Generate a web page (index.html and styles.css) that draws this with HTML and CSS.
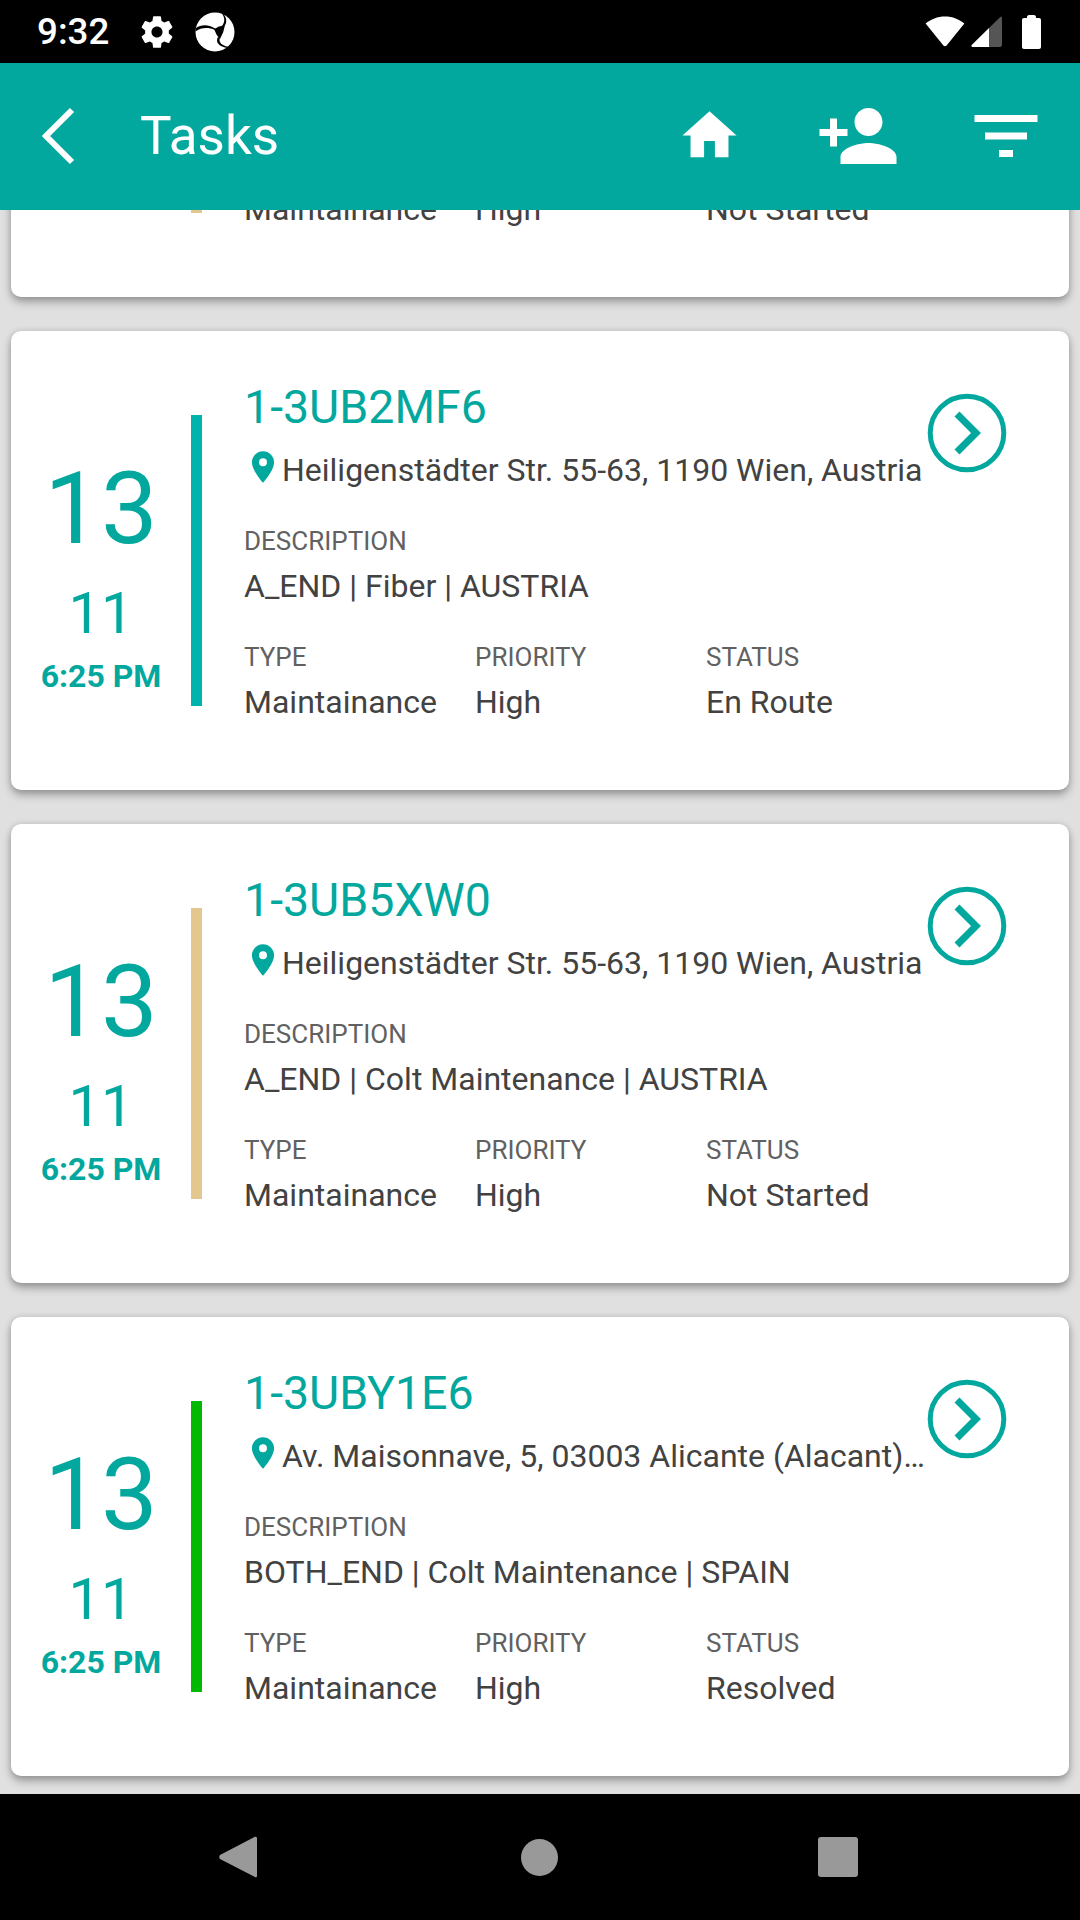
FILE: index.html
```html
<!DOCTYPE html>
<html>
    <head>
        <meta charset="utf-8" />
        <title>Tasks</title>
        <link rel="stylesheet" href="styles.css">
    </head>

    <body>
        <div class="phone">
            <div class="status-bar">
                <span class="clock">9:32</span>
                <svg class="gear" viewBox="0 0 24 24"><path fill="#fff" d="M19.43 12.98c.04-.32.07-.64.07-.98s-.03-.66-.07-.98l2.11-1.65c.19-.15.24-.42.12-.64l-2-3.46c-.12-.22-.39-.3-.61-.22l-2.49 1c-.52-.4-1.08-.73-1.69-.98l-.38-2.65C14.46 2.18 14.25 2 14 2h-4c-.25 0-.46.18-.49.42l-.38 2.65c-.61.25-1.17.59-1.69.98l-2.49-1c-.23-.09-.49 0-.61.22l-2 3.46c-.13.22-.07.49.12.64l2.11 1.65c-.04.32-.07.65-.07.98s.03.66.07.98l-2.11 1.65c-.19.15-.24.42-.12.64l2 3.46c.12.22.39.3.61.22l2.49-1c.52.4 1.08.73 1.69.98l.38 2.65c.03.24.24.42.49.42h4c.25 0 .46-.18.49-.42l.38-2.65c.61-.25 1.17-.59 1.69-.98l2.49 1c.23.09.49 0 .61-.22l2-3.46c.12-.22.07-.49-.12-.64l-2.11-1.65zM12 15.5c-1.93 0-3.5-1.57-3.5-3.5s1.57-3.5 3.5-3.5 3.5 1.57 3.5 3.5-1.57 3.5-3.5 3.5z"/></svg>
                <svg class="app-logo" viewBox="0 0 40 40">
                    <circle cx="20" cy="20" r="19.5" fill="#fff"/>
                    <path fill="#000" d="M19 17 Q24 14 30 13 Q29 20 25 27 Q21 23 19 17z"/>
                    <path fill="#000" d="M27 14 C30 10 30 6 27 1.500 L28.500 2 C32 6 32 11 29.500 14z"/>
                    <path fill="#000" d="M20 16.500 C13 12 6 12.500 1 16 L0.500 19.500 C6 15.500 13 15 20 18z"/>
                    <path fill="#000" d="M23 25 C20 30 24 35 33 36 L34.500 35 C27 34 23 30 25 26z"/>
                </svg>
                <svg class="wifi" viewBox="0 0 40 31"><path fill="#fff" d="M20 0.5C12.5 0.5 5.8 3.2 0.6 7.6L18.4 29.6c.8 1 2.4 1 3.2 0L39.4 7.6C34.2 3.2 27.5 0.5 20 0.5z"/></svg>
                <svg class="signal" viewBox="0 0 31 31">
                    <path fill="#555" d="M18 12 L29 1.2c.8-.8 2-.3 2 .8V29c0 1-.8 2-2 2H18z"/>
                    <path fill="#fff" d="M18 12 V31 H1.5c-1 0-1.5-1.2-.8-2z"/>
                </svg>
                <svg class="battery" viewBox="0 0 19 34"><path fill="#fff" d="M5 2c0-1 .7-2 2-2h5c1.300 0 2 1 2 2v1h3c1.200 0 2 .8 2 2v27c0 1.200-.8 2-2 2H2c-1.200 0-2-.8-2-2V5c0-1.200.8-2 2-2h3z"/></svg>
            </div>

            <div class="app-bar">
                <svg class="icon-back" viewBox="0 0 36 58"><path fill="none" stroke="#fff" stroke-width="6" d="M32 3 L6 29 L32 55"/></svg>
                <h1 class="app-title">Tasks</h1>
                <svg class="icon-home" viewBox="0 0 24 24"><path fill="#fff" d="M10 20v-6h4v6h5v-8h3L12 3 2 12h3v8z"/></svg>
                <svg class="icon-add" viewBox="0 0 24 24"><path fill="#fff" d="M15 12c2.210 0 4-1.790 4-4s-1.790-4-4-4-4 1.790-4 4 1.790 4 4 4zm-9-2V7H4v3H1v2h3v3h2v-3h3v-2H6zm9 4c-2.670 0-8 1.340-8 4v2h16v-2c0-2.660-5.330-4-8-4z"/></svg>
                <svg class="icon-filter" viewBox="0 0 24 24"><path fill="#fff" d="M10 18h4v-2h-4v2zM3 6v2h18V6H3zm3 7h12v-2H6v2z"/></svg>
            </div>

            <div class="task-list">
                <div class="card">
                    <div class="date"></div>
                    <div class="bar bar-pending"></div>
                    <div class="info info-scrolled">
                        <div class="fields">
                            <div class="value">Maintainance</div>
                            <div class="value">High</div>
                            <div class="value">Not Started</div>
                        </div>
                    </div>
                </div>

                <div class="card">
                    <div class="date">
                        <span class="day">13</span>
                        <span class="month">11</span>
                        <span class="time">6:25 PM</span>
                    </div>
                    <div class="bar bar-route"></div>
                    <div class="info">
                        <div class="task-id">1-3UB2MF6</div>
                        <div class="address">
                            <svg class="pin" viewBox="0 0 24 24"><path d="M12 2C8.130 2 5 5.130 5 9c0 5.250 7 13 7 13s7-7.750 7-13c0-3.870-3.130-7-7-7zm0 9.500a2.500 2.500 0 0 1 0-5 2.500 2.500 0 0 1 0 5z"/></svg>
                            <span class="address-text">Heiligenstädter Str. 55-63, 1190 Wien, Austria</span>
                        </div>
                        <div class="label label-desc">DESCRIPTION</div>
                        <div class="value">A_END | Fiber | AUSTRIA</div>
                        <div class="fields">
                            <div><div class="label">TYPE</div><div class="value">Maintainance</div></div>
                            <div><div class="label">PRIORITY</div><div class="value">High</div></div>
                            <div><div class="label">STATUS</div><div class="value">En Route</div></div>
                        </div>
                    </div>
                    <svg class="open" viewBox="0 0 80 80"><circle cx="40" cy="40" r="36.8" fill="none" stroke="#02a89e" stroke-width="5"/><path fill="none" stroke="#02a89e" stroke-width="7" d="M30 21 L49 40 L30 59"/></svg>
                </div>

                <div class="card">
                    <div class="date">
                        <span class="day">13</span>
                        <span class="month">11</span>
                        <span class="time">6:25 PM</span>
                    </div>
                    <div class="bar bar-pending"></div>
                    <div class="info">
                        <div class="task-id">1-3UB5XW0</div>
                        <div class="address">
                            <svg class="pin" viewBox="0 0 24 24"><path d="M12 2C8.130 2 5 5.130 5 9c0 5.250 7 13 7 13s7-7.750 7-13c0-3.870-3.130-7-7-7zm0 9.500a2.500 2.500 0 0 1 0-5 2.500 2.500 0 0 1 0 5z"/></svg>
                            <span class="address-text">Heiligenstädter Str. 55-63, 1190 Wien, Austria</span>
                        </div>
                        <div class="label label-desc">DESCRIPTION</div>
                        <div class="value">A_END | Colt Maintenance | AUSTRIA</div>
                        <div class="fields">
                            <div><div class="label">TYPE</div><div class="value">Maintainance</div></div>
                            <div><div class="label">PRIORITY</div><div class="value">High</div></div>
                            <div><div class="label">STATUS</div><div class="value">Not Started</div></div>
                        </div>
                    </div>
                    <svg class="open" viewBox="0 0 80 80"><circle cx="40" cy="40" r="36.8" fill="none" stroke="#02a89e" stroke-width="5"/><path fill="none" stroke="#02a89e" stroke-width="7" d="M30 21 L49 40 L30 59"/></svg>
                </div>

                <div class="card">
                    <div class="date">
                        <span class="day">13</span>
                        <span class="month">11</span>
                        <span class="time">6:25 PM</span>
                    </div>
                    <div class="bar bar-resolved"></div>
                    <div class="info">
                        <div class="task-id">1-3UBY1E6</div>
                        <div class="address">
                            <svg class="pin" viewBox="0 0 24 24"><path d="M12 2C8.130 2 5 5.130 5 9c0 5.250 7 13 7 13s7-7.750 7-13c0-3.870-3.130-7-7-7zm0 9.500a2.500 2.500 0 0 1 0-5 2.500 2.500 0 0 1 0 5z"/></svg>
                            <span class="address-text">Av. Maisonnave, 5, 03003 Alicante (Alacant), Spain</span>
                        </div>
                        <div class="label label-desc">DESCRIPTION</div>
                        <div class="value">BOTH_END | Colt Maintenance | SPAIN</div>
                        <div class="fields">
                            <div><div class="label">TYPE</div><div class="value">Maintainance</div></div>
                            <div><div class="label">PRIORITY</div><div class="value">High</div></div>
                            <div><div class="label">STATUS</div><div class="value">Resolved</div></div>
                        </div>
                    </div>
                    <svg class="open" viewBox="0 0 80 80"><circle cx="40" cy="40" r="36.8" fill="none" stroke="#02a89e" stroke-width="5"/><path fill="none" stroke="#02a89e" stroke-width="7" d="M30 21 L49 40 L30 59"/></svg>
                </div>
            </div>

            <div class="nav-bar">
                <svg class="nav-back" viewBox="0 0 38 42"><path fill="#999" d="M37 1c.6 0 1 .5 1 1v38c0 1.300-1.300 1.800-2 1L1 23c-1-1.200-1-2.800 0-4L35 1.200c.5-.3 1.300-.6 2-.2z"/></svg>
                <div class="nav-home"></div>
                <div class="nav-recent"></div>
            </div>
        </div>
    </body>
</html>
```

FILE: styles.css
```css
html,
body {
    margin: 0;
    padding: 0;
    font-family: 'Roboto', sans-serif;
    --teal: #02a89e;
    --dark-text: #424242;
    --label-text: #616161;
}

.phone {
    width: 1080px;
    height: 1920px;
    display: flex;
    flex-direction: column;
    overflow: hidden;
    background: #e0e0e0;
}

/* status bar */
.status-bar {
    height: 63px;
    flex: none;
    display: flex;
    align-items: center;
    background: #000;
    color: #fff;
    padding-left: 37px;
    padding-right: 39px;
    box-sizing: border-box;
}

.clock {
    font-size: 36.75px;
    font-weight: 500;
    line-height: 63px;
    width: 101px;
}

.gear {
    width: 38px;
    height: 38px;
}

.app-logo {
    width: 40px;
    height: 40px;
    margin-left: 19px;
}

.wifi {
    width: 40px;
    height: 31px;
    margin-left: auto;
}

.signal {
    width: 31px;
    height: 31px;
    margin-left: 6px;
}

.battery {
    width: 19px;
    height: 34px;
    margin-left: 20px;
}

/* app bar */
.app-bar {
    height: 147px;
    flex: none;
    display: flex;
    align-items: center;
    background: var(--teal);
    color: #fff;
    padding: 0 32px 2px 40px;
    box-sizing: border-box;
    position: relative;
    z-index: 1;
}

.icon-back {
    width: 36px;
    height: 58px;
}

.app-title {
    margin: 0 0 0 64px;
    font-size: 53px;
    font-weight: 400;
    line-height: 60px;
}

.icon-home {
    width: 65px;
    height: 65px;
    margin-left: auto;
}

.icon-add {
    width: 84px;
    height: 84px;
    margin-left: 74px;
}

.icon-filter {
    width: 84px;
    height: 84px;
    margin-left: 64px;
}

/* task list, scrolled so the first card is cut by the app bar */
.task-list {
    flex: 1;
    min-height: 0;
    overflow: hidden;
    display: flex;
    flex-direction: column;
    justify-content: flex-end;
    gap: 34px;
    padding: 0 11px 18px;
}

.card {
    flex: none;
    height: 459px;
    display: flex;
    background: #fff;
    border-radius: 10px;
    box-shadow: 0 5px 9px rgba(0, 0, 0, 0.3), 0 0 6px rgba(0, 0, 0, 0.12);
}

.date {
    width: 180px;
    flex: none;
    padding-top: 118px;
    box-sizing: border-box;
    display: flex;
    flex-direction: column;
    align-items: center;
    color: var(--teal);
}

.day {
    font-size: 101px;
    line-height: 120px;
}

.month {
    font-size: 57.75px;
    line-height: 68px;
    margin-top: 10px;
}

.time {
    font-size: 32px;
    font-weight: 700;
    line-height: 37px;
    margin-top: 11px;
}

.bar {
    width: 11px;
    height: 291px;
    flex: none;
    margin-top: 84px;
}

.bar-route {
    background: #00b3ac;
}

.bar-pending {
    background: #e3c78f;
}

.bar-resolved {
    background: #00b900;
}

.info {
    flex: none;
    width: 683px;
    margin-left: 42px;
    padding-top: 49px;
}

.info-scrolled {
    padding-top: 305px;
}

.task-id {
    font-size: 46.5px;
    line-height: 55px;
    color: var(--teal);
}

.address {
    display: flex;
    align-items: flex-start;
    margin-top: 17px;
    color: var(--dark-text);
    font-size: 32px;
    line-height: 37px;
}

.pin {
    width: 38px;
    height: 38px;
    flex: none;
    fill: var(--teal);
    margin-top: -4px;
}

.address-text {
    width: 644px;
    white-space: nowrap;
    overflow: hidden;
    text-overflow: ellipsis;
}

.label {
    font-size: 26px;
    line-height: 31px;
    color: var(--label-text);
}

.label-desc {
    margin-top: 37px;
}

.value {
    font-size: 32px;
    line-height: 37px;
    margin-top: 11px;
    color: var(--dark-text);
    white-space: nowrap;
}

.fields {
    display: grid;
    grid-template-columns: 231px 231px 221px;
    margin-top: 37px;
}

.open {
    width: 80px;
    height: 80px;
    flex: none;
    margin-top: 62px;
}

/* nav bar */
.nav-bar {
    height: 126px;
    flex: none;
    background: #000;
    display: flex;
    align-items: center;
    padding-left: 219px;
    box-sizing: border-box;
    position: relative;
    z-index: 1;
}

.nav-back {
    width: 38px;
    height: 42px;
}

.nav-home {
    width: 37px;
    height: 37px;
    border-radius: 50%;
    background: #999;
    margin-left: 264px;
}

.nav-recent {
    width: 40px;
    height: 40px;
    border-radius: 3px;
    background: #999;
    margin-left: 260px;
}
```
